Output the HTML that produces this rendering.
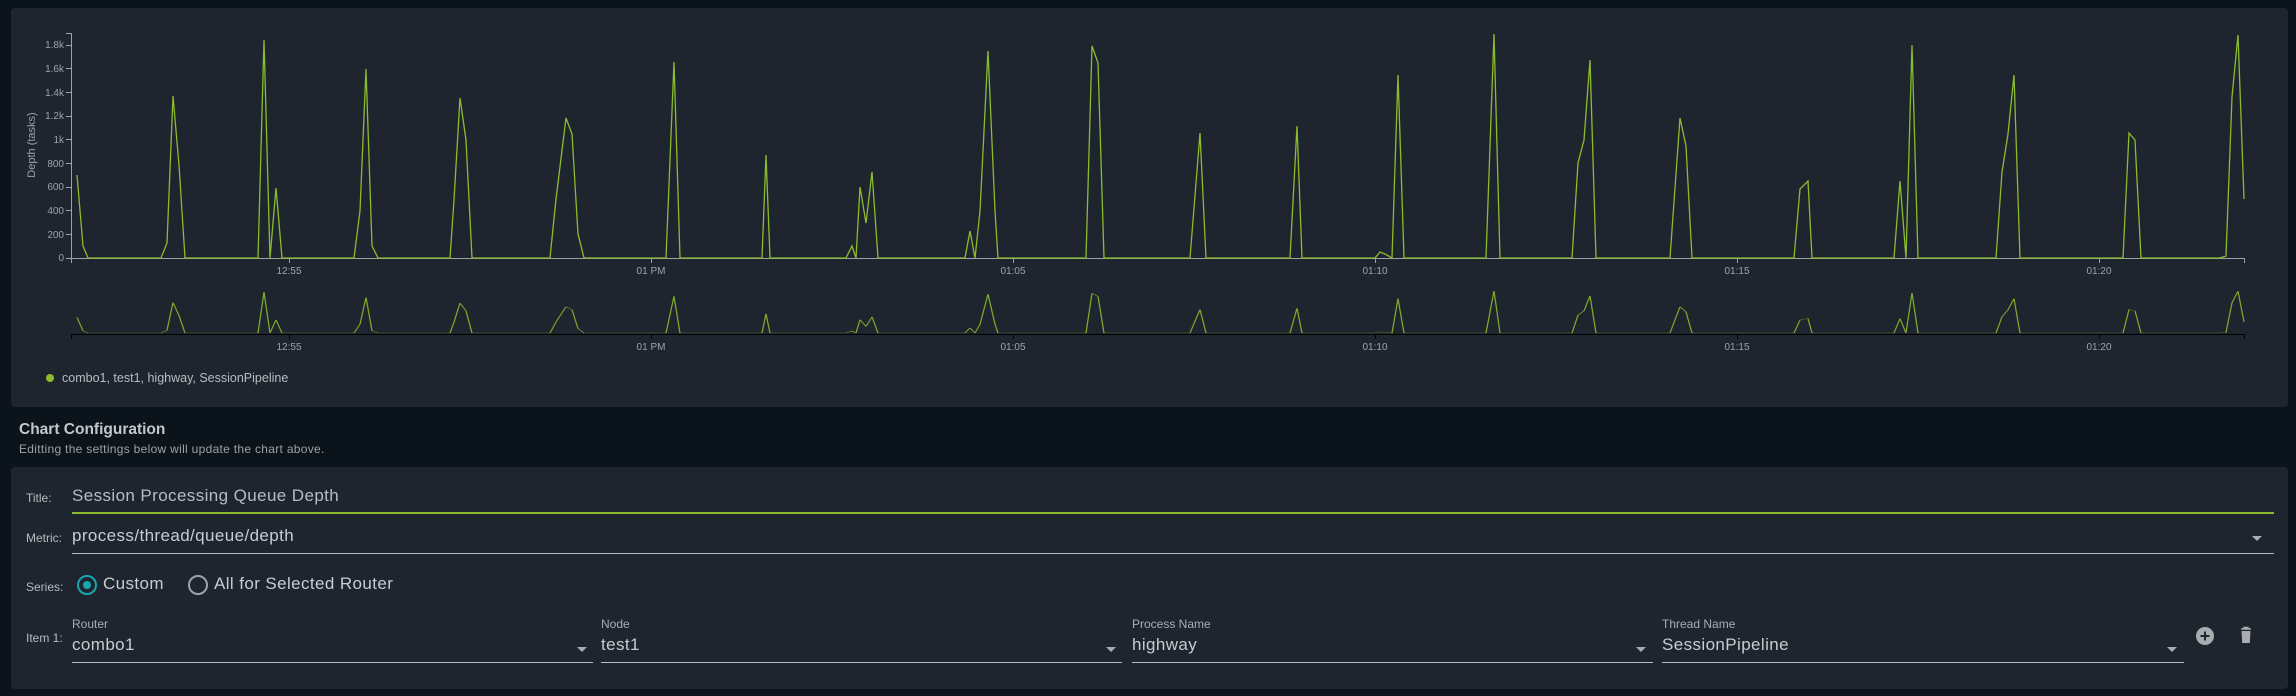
<!DOCTYPE html>
<html><head><meta charset="utf-8"><style>
*{margin:0;padding:0;box-sizing:border-box}
body{width:2296px;height:696px;background:#0b131b;font-family:"Liberation Sans",sans-serif;position:relative;overflow:hidden}
.panel{position:absolute;left:11px;background:#1e252e;border-radius:4px}
.t{position:absolute;white-space:nowrap}
.lbl{color:#b8bcc0;font-size:12px}
.val{color:#c8ccd0;font-size:17px;letter-spacing:0.4px}
.ul{position:absolute;height:1px;background:#b8bcc0}
.arr{position:absolute;width:0;height:0;border-left:5px solid transparent;border-right:5px solid transparent;border-top:5px solid #a9adb0}
.small{color:#a9adb2;font-size:12px}
</style></head><body>
<div class="panel" style="top:8px;width:2277px;height:399px"></div>
<svg style="position:absolute;left:0;top:0" width="2296" height="410">
<g font-family="Liberation Sans, sans-serif" font-size="10" fill="#9ea3a8" text-anchor="end">
<text x="64" y="261">0</text><text x="64" y="238">200</text><text x="64" y="214">400</text><text x="64" y="190">600</text><text x="64" y="167">800</text><text x="64" y="143">1k</text><text x="64" y="119">1.2k</text><text x="64" y="96">1.4k</text><text x="64" y="72">1.6k</text><text x="64" y="48">1.8k</text>
</g>
<g stroke="#9ea3a8" stroke-width="1">
<line x1="71.5" y1="33" x2="71.5" y2="263"/><line x1="66" y1="33.5" x2="71" y2="33.5"/>
<line x1="66" y1="258.5" x2="2244" y2="258.5"/>
<line x1="66" y1="234.5" x2="71" y2="234.5"/><line x1="66" y1="210.5" x2="71" y2="210.5"/><line x1="66" y1="187.5" x2="71" y2="187.5"/><line x1="66" y1="163.5" x2="71" y2="163.5"/><line x1="66" y1="139.5" x2="71" y2="139.5"/><line x1="66" y1="116.5" x2="71" y2="116.5"/><line x1="66" y1="92.5" x2="71" y2="92.5"/><line x1="66" y1="68.5" x2="71" y2="68.5"/><line x1="66" y1="45.5" x2="71" y2="45.5"/>
<line x1="289.5" y1="258" x2="289.5" y2="263"/><line x1="651.5" y1="258" x2="651.5" y2="263"/><line x1="1013.5" y1="258" x2="1013.5" y2="263"/><line x1="1375.5" y1="258" x2="1375.5" y2="263"/><line x1="1737.5" y1="258" x2="1737.5" y2="263"/><line x1="2099.5" y1="258" x2="2099.5" y2="263"/><line x1="2244.5" y1="258" x2="2244.5" y2="263"/>
</g>
<text x="35" y="145" transform="rotate(-90 35 145)" font-family="Liberation Sans, sans-serif" font-size="11" fill="#9ea3a8" text-anchor="middle">Depth (tasks)</text>
<g font-family="Liberation Sans, sans-serif" font-size="10" fill="#9ea3a8" text-anchor="middle">
<text x="289" y="274">12:55</text><text x="651" y="274">01 PM</text><text x="1013" y="274">01:05</text><text x="1375" y="274">01:10</text><text x="1737" y="274">01:15</text><text x="2099" y="274">01:20</text>
<text x="289" y="350">12:55</text><text x="651" y="350">01 PM</text><text x="1013" y="350">01:05</text><text x="1375" y="350">01:10</text><text x="1737" y="350">01:15</text><text x="2099" y="350">01:20</text>
</g>
<g stroke="#000" stroke-width="1">
<line x1="71" y1="334.5" x2="2245" y2="334.5"/><line x1="71.5" y1="334" x2="71.5" y2="339"/><line x1="289.5" y1="334" x2="289.5" y2="339"/><line x1="651.5" y1="334" x2="651.5" y2="339"/><line x1="1013.5" y1="334" x2="1013.5" y2="339"/><line x1="1375.5" y1="334" x2="1375.5" y2="339"/><line x1="1737.5" y1="334" x2="1737.5" y2="339"/><line x1="2099.5" y1="334" x2="2099.5" y2="339"/><line x1="2244.5" y1="334" x2="2244.5" y2="339"/>
</g>
<defs><polyline id="d" points="77,175 83,246 88,258 161,258 167,243 173,96 179,165 185,258 258,258 264,40 270,258 276,188 282,258 354,258 360,211 366,69 372,246 378,258 450,258 454,200 460,98 466,140 472,258 550,258 556,199 566,118 572,134 578,234 584,258 666,258 674,62 680,258 762,258 766,155 770,258 846,258 852,246 856,258 860,187 866,223 872,172 878,258 965,258 970,231 975,258 980,211 988,51 995,211 998,258 1086,258 1092,46 1098,63 1104,258 1190,258 1200,133 1206,258 1290,258 1297,126 1302,258 1375,258 1380,252 1385,254 1392,258 1398,75 1404,258 1486,258 1494,34 1500,258 1572,258 1578,163 1584,140 1590,60 1596,258 1670,258 1680,118 1686,146 1692,258 1794,258 1800,189 1808,181 1812,258 1894,258 1900,181 1906,258 1912,45 1918,258 1996,258 2002,172 2008,134 2014,75 2020,258 2123,258 2129,133 2135,140 2141,258 2220,258 2226,256 2232,97 2238,35 2244,199"/></defs>
<use href="#d" fill="none" stroke="#8dbb2e" stroke-width="1.3"/>
<g transform="translate(0,284.6) scale(1,0.1877)"><use href="#d" fill="none" stroke="#7fa92a" stroke-width="1.3" vector-effect="non-scaling-stroke"/></g>
<circle cx="50" cy="378" r="4" fill="#8dbb2e"/>
<text x="62" y="382" font-family="Liberation Sans, sans-serif" font-size="12.5" fill="#b8bcc0">combo1, test1, highway, SessionPipeline</text>
</svg>

<div class="t" style="left:19px;top:421px;color:#c4c8cc;font-size:15.5px;font-weight:bold">Chart Configuration</div>
<div class="t" style="left:19px;top:442px;color:#9ea3a8;font-size:12px;letter-spacing:0.3px">Editting the settings below will update the chart above.</div>

<div class="panel" style="top:467px;width:2277px;height:222px"></div>
<div class="t lbl" style="left:26px;top:491px">Title:</div>
<div class="t val" style="left:72px;top:486px;color:#b8bcc0">Session Processing Queue Depth</div>
<div class="ul" style="left:72px;top:512px;width:2202px;height:2px;background:#8dbb2e"></div>

<div class="t lbl" style="left:26px;top:531px">Metric:</div>
<div class="t val" style="left:72px;top:526px">process/thread/queue/depth</div>
<div class="arr" style="left:2252px;top:536px"></div>
<div class="ul" style="left:72px;top:553px;width:2202px"></div>

<div class="t lbl" style="left:26px;top:580px">Series:</div>
<div style="position:absolute;left:77px;top:575px;width:20px;height:20px;border:2px solid #1aa5b0;border-radius:50%"><div style="position:absolute;left:4px;top:4px;width:8px;height:8px;border-radius:50%;background:#1aa5b0"></div></div>
<div class="t val" style="left:103px;top:574px">Custom</div>
<div style="position:absolute;left:188px;top:575px;width:20px;height:20px;border:2px solid #9ea3a8;border-radius:50%"></div>
<div class="t val" style="left:214px;top:574px">All for Selected Router</div>

<div class="t lbl" style="left:26px;top:631px">Item 1:</div>
<div class="t small" style="left:72px;top:617px">Router</div>
<div class="t val" style="left:72px;top:635px">combo1</div>
<div class="arr" style="left:577px;top:647px"></div>
<div class="ul" style="left:72px;top:662px;width:521px"></div>
<div class="t small" style="left:601px;top:617px">Node</div>
<div class="t val" style="left:601px;top:635px">test1</div>
<div class="arr" style="left:1106px;top:647px"></div>
<div class="ul" style="left:601px;top:662px;width:521px"></div>
<div class="t small" style="left:1132px;top:617px">Process Name</div>
<div class="t val" style="left:1132px;top:635px">highway</div>
<div class="arr" style="left:1636px;top:647px"></div>
<div class="ul" style="left:1132px;top:662px;width:521px"></div>
<div class="t small" style="left:1662px;top:617px">Thread Name</div>
<div class="t val" style="left:1662px;top:635px">SessionPipeline</div>
<div class="arr" style="left:2167px;top:647px"></div>
<div class="ul" style="left:1662px;top:662px;width:522px"></div>

<svg style="position:absolute;left:2195px;top:626px" width="70" height="22">
<circle cx="10" cy="10" r="9" fill="#a9adb0"/>
<path d="M10 5.5v9M5.5 10h9" stroke="#1e252e" stroke-width="2"/>
<path d="M46 3h10M49 3v-1.5h4V3" stroke="#a9adb0" stroke-width="1.6" fill="none"/>
<path d="M46.5 5h9l-0.7 12h-7.6z" fill="#a9adb0"/>
</svg>
</body></html>
